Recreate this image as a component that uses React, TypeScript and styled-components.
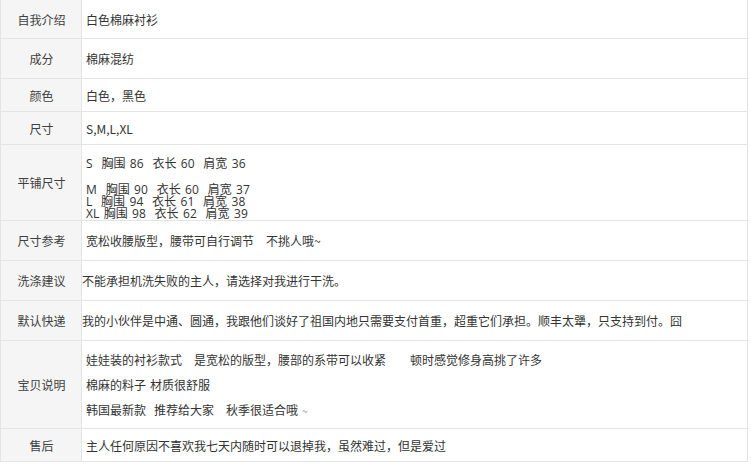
import styled, { createGlobalStyle } from "styled-components";

const GlobalStyle = createGlobalStyle`
  html, body {
    margin: 0;
    padding: 0;
    background: #fff;
  }
  body {
    font-family: "Noto Sans CJK SC", "Noto Sans", sans-serif;
    font-size: 12px;
    color: #333;
    word-spacing: 1.3px;
  }
`;

type RowData = {
  label: string;
  height: number;
  text: string;
  flush?: boolean;
};

const topRows: RowData[] = [
  { label: "自我介绍", height: 39, text: "白色棉麻衬衫" },
  { label: "成分", height: 40, text: "棉麻混纺" },
  { label: "颜色", height: 33, text: "白色，黑色" },
  { label: "尺寸", height: 33, text: "S,M,L,XL" },
];

const midRows: RowData[] = [
  { label: "尺寸参考", height: 40, text: "宽松收腰版型，腰带可自行调节\u00a0\u00a0\u00a0不挑人哦~" },
  {
    label: "洗涤建议",
    height: 40,
    text: "不能承担机洗失败的主人，请选择对我进行干洗。",
    flush: true,
  },
  {
    label: "默认快递",
    height: 40,
    text: "我的小伙伴是中通、圆通，我跟他们谈好了祖国内地只需要支付首重，超重它们承担。顺丰太犟，只支持到付。囧",
    flush: true,
  },
];

const sizes = [
  ["M", "90", "60", "37"],
  ["L", "94", "61", "38"],
  ["XL", "98", "62", "39"],
];

export default function App() {
  return (
    <>
      <GlobalStyle />
      <Table>
        {topRows.map((r) => (
          <Row key={r.label} $h={r.height}>
            <Label>{r.label}</Label>
            <Value $flush={r.flush}>{r.text}</Value>
          </Row>
        ))}

        <Row $h={76}>
          <Label>平铺尺寸</Label>
          <SizeCell>
            <SizeLine>S&nbsp;&nbsp;胸围 86&nbsp;&nbsp;衣长 60&nbsp;&nbsp;肩宽 36</SizeLine>
            <SizeGroup>
              {sizes.map(([s, a, b, c]) => (
                <SizeLine key={s}>
                  {s}
                  {s.length === 1 ? "\u00a0\u00a0" : "\u00a0"}胸围 {a}&nbsp;&nbsp;衣长 {b}&nbsp;&nbsp;肩宽 {c}
                </SizeLine>
              ))}
            </SizeGroup>
          </SizeCell>
        </Row>

        {midRows.map((r) => (
          <Row key={r.label} $h={r.height}>
            <Label>{r.label}</Label>
            <Value $flush={r.flush}>{r.text}</Value>
          </Row>
        ))}

        <Row $h={88}>
          <Label>宝贝说明</Label>
          <Value>
            <Para>
              娃娃装的衬衫款式&nbsp;&nbsp;&nbsp;是宽松的版型，腰部的系带可以收紧&nbsp;&nbsp;&nbsp;&nbsp;&nbsp;&nbsp;顿时感觉修身高挑了许多
            </Para>
            <Para>棉麻的料子 材质很舒服</Para>
            <Para>
              韩国最新款&nbsp;&nbsp;推荐给大家&nbsp;&nbsp;&nbsp;秋季很适合哦 <Tilde>~</Tilde>
            </Para>
          </Value>
        </Row>

        <Row $h={33}>
          <Label>售后</Label>
          <Value>主人任何原因不喜欢我七天内随时可以退掉我，虽然难过，但是爱过</Value>
        </Row>
      </Table>
    </>
  );
}

const Table = styled.div`
  width: 748px;
  box-sizing: border-box;
  border-left: 1px solid #e4e4e4;
  border-right: 1px solid #e4e4e4;
`;

const Row = styled.div<{ $h: number }>`
  display: grid;
  grid-template-columns: 81px 1fr;
  height: ${(p) => p.$h}px;
  box-sizing: border-box;
  border-bottom: 1px solid #e4e4e4;
  overflow: hidden;
`;

const Label = styled.div`
  display: flex;
  align-items: center;
  justify-content: center;
  padding-left: 1px;
  background: #f5f5f5;
  border-right: 1px solid #e4e4e4;
  color: #404040;
  white-space: nowrap;
`;

const Value = styled.div<{ $flush?: boolean }>`
  display: flex;
  flex-direction: column;
  justify-content: center;
  padding-left: ${(p) => (p.$flush ? 0 : 4)}px;
  white-space: nowrap;
  color: #333;
`;

const SizeCell = styled.div`
  display: flex;
  flex-direction: column;
  padding: 13px 0 0 4px;
  gap: 14px;
  overflow: hidden;
`;

const SizeGroup = styled.div`
  display: flex;
  flex-direction: column;
`;

const SizeLine = styled.div`
  height: 12px;
  line-height: 12px;
  white-space: nowrap;
  font-family: "Open Sans", "Noto Sans CJK SC", sans-serif;
`;

const Para = styled.div`
  line-height: 25px;
`;

const Tilde = styled.span`
  color: #8a9bb0;
  font-size: 10px;
`;
